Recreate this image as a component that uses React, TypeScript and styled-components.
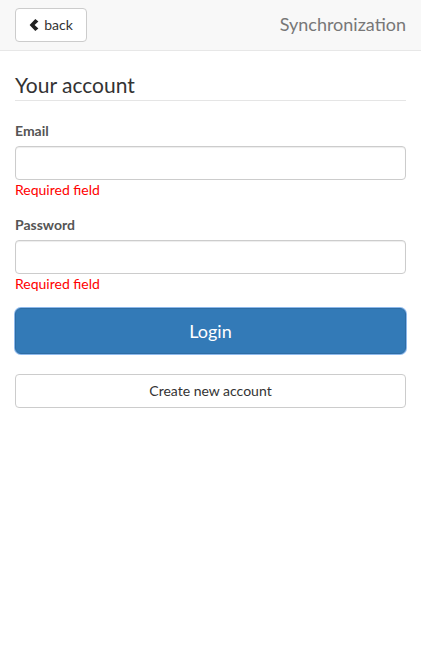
import React from "react";
import styled, { createGlobalStyle } from "styled-components";

const Global = createGlobalStyle`
  * { box-sizing: border-box; }
  html, body { margin: 0; padding: 0; background: #fff; }
  body {
    font-family: Lato, "Helvetica Neue", Arial, sans-serif;
    font-size: 14px;
    line-height: 1.42857;
    color: #333;
  }
`;

const Page = styled.div`
  width: 421px;
  min-height: 655px;
  display: flex;
  flex-direction: column;
`;

const Navbar = styled.header`
  height: 51px;
  background: #f8f8f8;
  border-bottom: 1px solid #e7e7e7;
  display: flex;
  align-items: center;
  justify-content: space-between;
  padding: 0 15px;
`;

const BackButton = styled.button`
  height: 34px;
  width: 72px;
  display: flex;
  align-items: center;
  justify-content: center;
  gap: 5px;
  padding: 0;
  background: #fff;
  border: 1px solid #ccc;
  border-radius: 4px;
  font-family: inherit;
  font-size: 14px;
  color: #333;
  margin-top: -1px;
`;

const Title = styled.div`
  font-size: 18px;
  color: #777;
  margin-top: -1px;
`;

const Content = styled.main`
  padding: 19px 15px 0;
  display: flex;
  flex-direction: column;
`;

const Legend = styled.div`
  font-size: 21px;
  line-height: 30px;
  color: #333;
  border-bottom: 1px solid #e5e5e5;
  margin-bottom: 20px;
`;

const FormGroup = styled.div`
  display: flex;
  flex-direction: column;
  margin-bottom: 15px;
`;

const Label = styled.label`
  font-weight: 700;
  color: #555;
  line-height: 20px;
  margin-bottom: 5px;
`;

const Input = styled.input`
  height: 34px;
  width: 100%;
  border: 1px solid #ccc;
  border-radius: 4px;
  box-shadow: inset 0 1px 1px rgba(0, 0, 0, 0.075);
  padding: 6px 12px;
  font-family: inherit;
  font-size: 14px;
  outline: none;
`;

const Help = styled.div`
  color: #ff0000;
  line-height: 20px;
`;

const PrimaryButton = styled.button`
  height: 46px;
  width: 100%;
  margin-top: -1px;
  background: #337ab7;
  border: 1px solid #2e6da4;
  border-radius: 6px;
  box-shadow: 0 0 0 1px #8db9ec;
  color: #fff;
  font-family: inherit;
  font-size: 18px;
  line-height: 24px;
`;

const DefaultButton = styled.button`
  height: 34px;
  width: 100%;
  margin-top: 20px;
  padding-bottom: 2px;
  background: #fff;
  border: 1px solid #ccc;
  border-radius: 4px;
  color: #333;
  font-family: inherit;
  font-size: 14px;
`;

const Chevron = () => (
  <svg width="10" height="12" viewBox="0 0 10 12" aria-hidden style={{ marginTop: 1 }}>
    <path d="M6.3 0 L9.4 2.6 L5.6 6 L9.4 9.4 L6.3 12 L0.6 6 Z" fill="#222" />
  </svg>
);

export default function App() {
  return (
    <Page>
      <Global />
      <Navbar>
        <BackButton>
          <Chevron />
          back
        </BackButton>
        <Title>Synchronization</Title>
      </Navbar>
      <Content>
        <Legend>Your account</Legend>
        <FormGroup>
          <Label>Email</Label>
          <Input type="email" />
          <Help>Required field</Help>
        </FormGroup>
        <FormGroup>
          <Label>Password</Label>
          <Input type="password" />
          <Help>Required field</Help>
        </FormGroup>
        <PrimaryButton>Login</PrimaryButton>
        <DefaultButton>Create new account</DefaultButton>
      </Content>
    </Page>
  );
}
